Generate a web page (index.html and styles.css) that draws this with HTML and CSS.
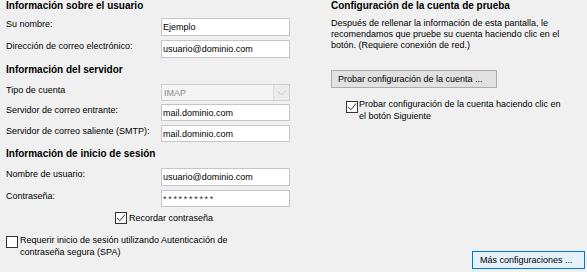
FILE: index.html
```html
<!DOCTYPE html>
<html>
<head>
<meta name="viewport" content="width=device-width, initial-scale=1">
<link rel="stylesheet" href="styles.css">
</head>
<body>
<div class="page">
  <div class="col-left">
    <div class="heading">Información sobre el usuario</div>
    <div class="row row-first">
      <label class="label">Su nombre:</label>
      <input class="field" type="text" value="Ejemplo">
    </div>
    <div class="row">
      <label class="label">Dirección de correo electrónico:</label>
      <input class="field" type="text" value="usuario@dominio.com">
    </div>

    <div class="heading heading-mid">Información del servidor</div>
    <div class="row row-first row-small">
      <label class="label">Tipo de cuenta</label>
      <div class="combo">
        <span class="combo-text">IMAP</span>
        <span class="combo-btn">
          <svg width="9" height="6" viewBox="0 0 9 6"><path d="M0.5 1 L4.5 5 L8.5 1" fill="none" stroke="#c4c4c4" stroke-width="1"/></svg>
        </span>
      </div>
    </div>
    <div class="row row-small row-tight">
      <label class="label">Servidor de correo entrante:</label>
      <input class="field" type="text" value="mail.dominio.com">
    </div>
    <div class="row row-small">
      <label class="label">Servidor de correo saliente (SMTP):</label>
      <input class="field" type="text" value="mail.dominio.com">
    </div>

    <div class="heading heading-mid">Información de inicio de sesión</div>
    <div class="row row-first">
      <label class="label">Nombre de usuario:</label>
      <input class="field" type="text" value="usuario@dominio.com">
    </div>
    <div class="row row-small">
      <label class="label">Contraseña:</label>
      <input class="field field-pass" type="text" value="**********">
    </div>

    <div class="check check-remember">
      <span class="box"><svg width="10" height="10" viewBox="0 0 10 10"><path d="M1.2 5 L3.8 7.8 L9 1.5" fill="none" stroke="#333" stroke-width="1"/></svg></span>
      <span>Recordar contraseña</span>
    </div>
    <div class="check check-spa">
      <span class="box"></span>
      <span>Requerir inicio de sesión utilizando Autenticación de<br>contraseña segura (SPA)</span>
    </div>
  </div>

  <div class="col-right">
    <div class="heading">Configuración de la cuenta de prueba</div>
    <p class="note">Después de rellenar la información de esta pantalla, le<br>recomendamos que pruebe su cuenta haciendo clic en el<br>botón. (Requiere conexión de red.)</p>
    <button class="btn btn-test">Probar configuración de la cuenta ...</button>
    <div class="check check-next">
      <span class="box"><svg width="10" height="10" viewBox="0 0 10 10"><path d="M1.2 5 L3.8 7.8 L9 1.5" fill="none" stroke="#333" stroke-width="1"/></svg></span>
      <span>Probar configuración de la cuenta haciendo clic en<br>el botón Siguiente</span>
    </div>
    <button class="btn btn-more">Más configuraciones ...</button>
  </div>
</div>
</body>
</html>
```
FILE: styles.css
```css
body {
  margin: 0;
  background-color: #f0f0f0;
  color: #000;
  font-family: "Liberation Sans", Arial, sans-serif;
  font-size: 9px;
  line-height: 12px;
}
.page {
  display: flex;
  height: 272px;
}
.col-left {
  width: 325px;
  padding-left: 6px;
}
.col-right {
  flex: 1;
  display: flex;
  flex-direction: column;
  align-items: flex-start;
  padding-bottom: 3px;
}
.heading {
  font-size: 10px;
  font-weight: bold;
  line-height: 12px;
}
.heading-mid {
  margin-top: 6px;
}
.row {
  display: flex;
  align-items: flex-start;
  height: 18px;
  margin-top: 4px;
}
.row-first {
  margin-top: 6px;
}
.heading-mid + .row-first {
  margin-top: 8px;
}
.row-small {
  height: 17px;
}
.row-tight {
  margin-top: 3px;
}
.label {
  width: 155px;
  flex-shrink: 0;
}
.field {
  box-sizing: border-box;
  width: 129px;
  height: 100%;
  margin: 0;
  padding: 0 1px;
  border: 1px solid #c6c6c6;
  background-color: #fff;
  font-family: "Liberation Sans", Arial, sans-serif;
  font-size: 9px;
  color: #000;
  outline: none;
}
.field-pass {
  letter-spacing: 1.7px;
  color: #333;
}
.combo {
  box-sizing: border-box;
  width: 129px;
  height: 100%;
  display: flex;
  align-items: center;
  justify-content: space-between;
  border: 1px solid #cfcfcf;
  background-color: #f4f4f4;
}
.combo-text {
  padding-left: 2px;
  color: #8c8c8c;
}
.combo-btn {
  width: 15px;
  height: 100%;
  display: flex;
  align-items: center;
  justify-content: center;
  border-left: 1px solid #dcdcdc;
  background-color: #ececec;
}
.check {
  display: flex;
  align-items: flex-start;
  gap: 2px;
}
.box {
  box-sizing: border-box;
  width: 12px;
  height: 12px;
  flex-shrink: 0;
  display: flex;
  align-items: center;
  justify-content: center;
  border: 1px solid #333;
  background-color: #fff;
}
.check-remember {
  margin-top: 5px;
  padding-left: 109px;
}
.check-spa {
  margin-top: 10px;
}
.check-spa .box {
  margin-top: 2px;
}
.note {
  margin: 6px 0 0;
  line-height: 11px;
  white-space: nowrap;
}
.btn {
  box-sizing: border-box;
  height: 18px;
  padding: 0 6px;
  font-family: "Liberation Sans", Arial, sans-serif;
  font-size: 9px;
  text-align: left;
  color: #000;
}
.btn-test {
  width: 166px;
  margin-top: 19px;
  border: 1px solid #adadad;
  background-color: #e1e1e1;
}
.check-next {
  margin-top: 10px;
  padding-left: 15px;
  gap: 1px;
}
.check-next .box {
  margin-top: 3px;
}
.btn-more {
  width: 113px;
  margin-top: auto;
  margin-right: 2px;
  align-self: flex-end;
  padding-left: 7px;
  border: 1px solid #0078d7;
  background-color: #e5f1fb;
}
```
